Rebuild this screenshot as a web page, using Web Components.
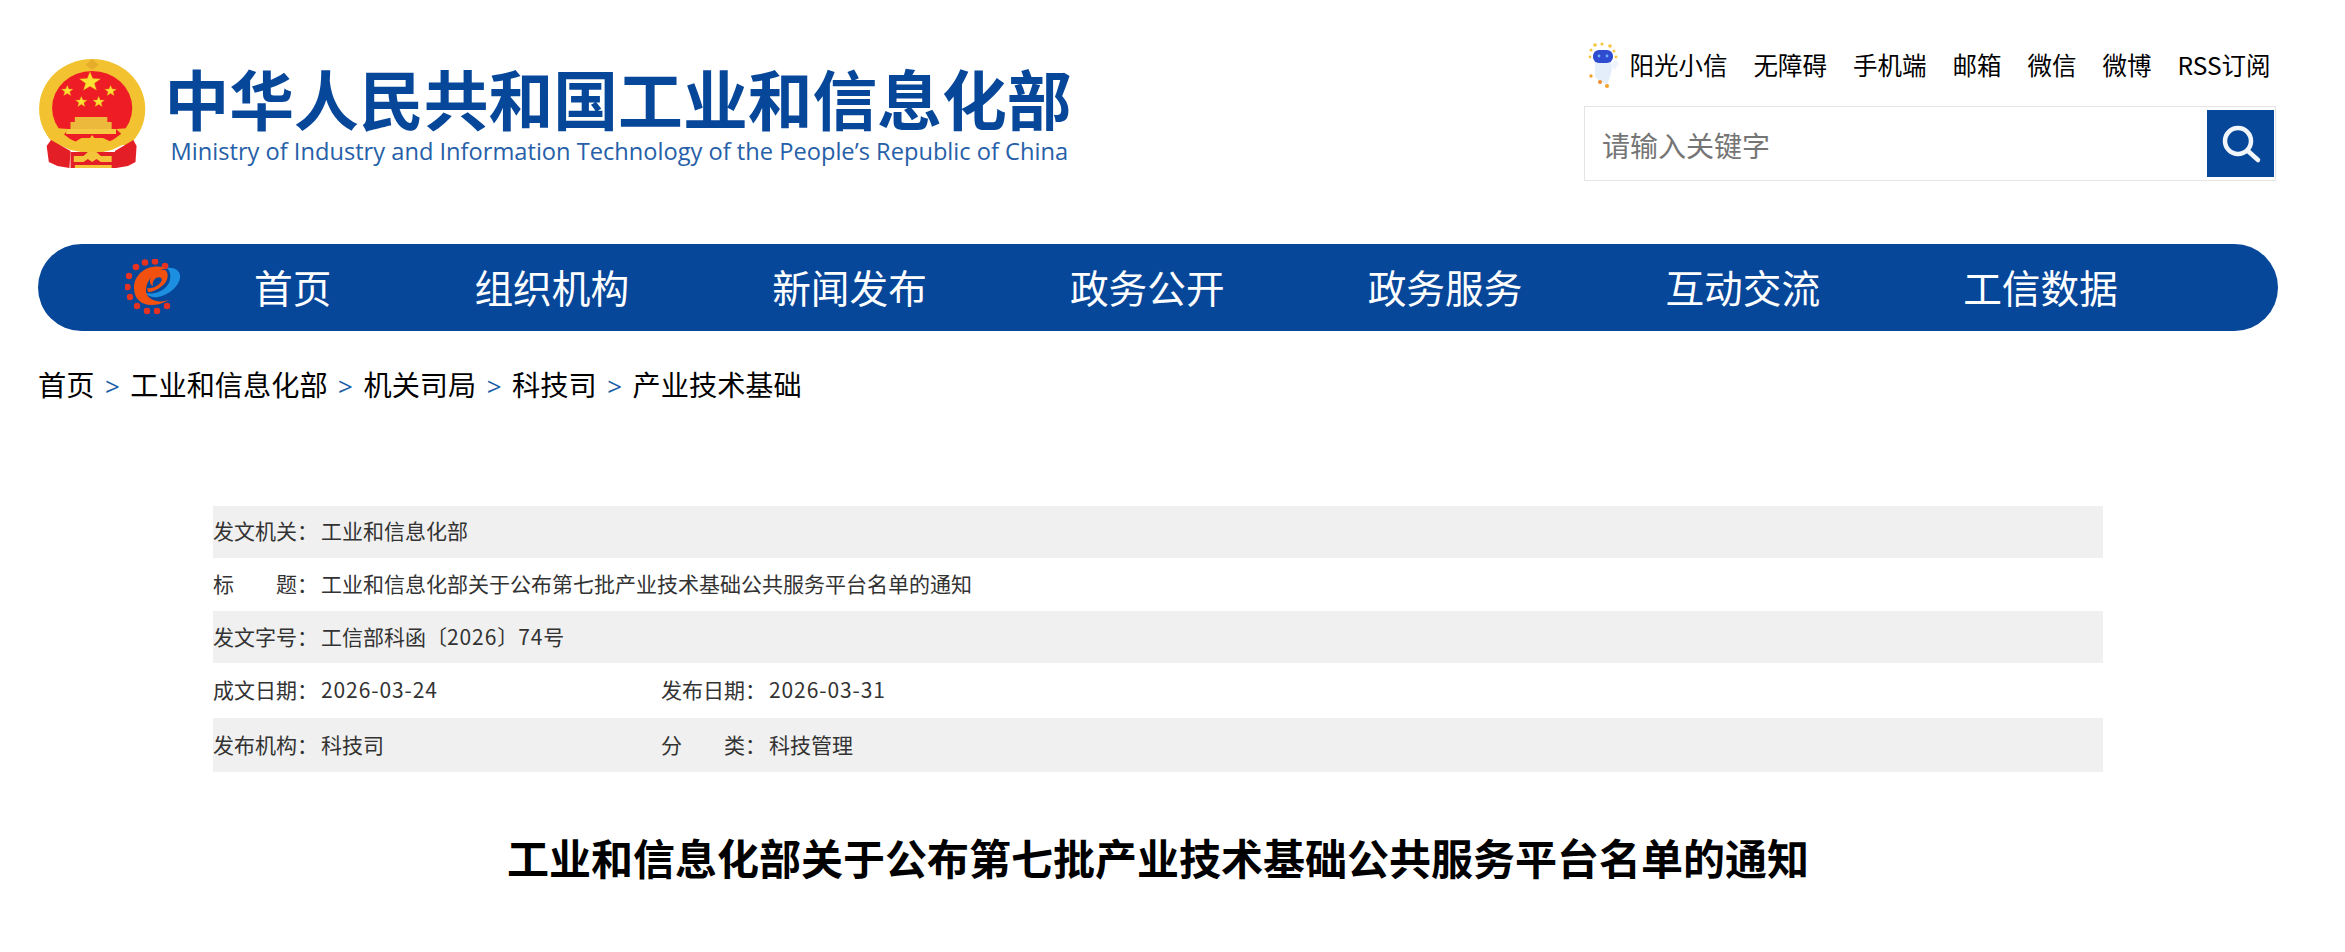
<!DOCTYPE html>
<html lang="zh">
<head>
<meta charset="utf-8">
<title>工业和信息化部关于公布第七批产业技术基础公共服务平台名单的通知</title>
<style>
    html,body{margin:0;background:#fff;}
    body{font-family:"Noto Sans CJK SC","Liberation Sans",sans-serif;color:#000;overflow:hidden;}
</style>
</head>
<body>
<page-wrap>
    <site-header></site-header>
    <main-nav></main-nav>
    <bread-crumb>
        <span>首页</span><span>工业和信息化部</span><span>机关司局</span><span>科技司</span><span>产业技术基础</span>
    </bread-crumb>
    <doc-meta>
        <meta-row label="发文机关：" value="工业和信息化部"></meta-row>
        <meta-row label="标　　题：" value="工业和信息化部关于公布第七批产业技术基础公共服务平台名单的通知"></meta-row>
        <meta-row label="发文字号：" value="工信部科函〔2026〕74号"></meta-row>
        <meta-row label="成文日期：" value="2026-03-24" label2="发布日期：" value2="2026-03-31"></meta-row>
        <meta-row label="发布机构：" value="科技司" label2="分　　类：" value2="科技管理"></meta-row>
    </doc-meta>
    <doc-title>工业和信息化部关于公布第七批产业技术基础公共服务平台名单的通知</doc-title>
</page-wrap>

<script>
const blue = "#07479a";

class PageWrap extends HTMLElement{
    constructor(){
        super();
        this.attachShadow({mode:"open"}).innerHTML = `
        <style>
        :host{display:block;width:2240px;margin-left:38px;}
        </style>
        <slot></slot>`;
    }
}

class GovEmblem extends HTMLElement{
    constructor(){
        super();
        const star = (x,y,r)=>{
            let p = [];
            for(let i=0;i<10;i++){
                const a = -Math.PI/2 + i*Math.PI/5, q = i%2 ? r*0.42 : r;
                p.push((x+q*Math.cos(a)).toFixed(1)+","+(y+q*Math.sin(a)).toFixed(1));
            }
            return `<polygon points="${p.join(" ")}" fill="#fbe232" stroke="#e9a820" stroke-width=".4"/>`;
        };
        this.attachShadow({mode:"open"}).innerHTML = `
        <style>
        :host{display:block;width:130px;height:120px;}
        svg{display:block;filter:blur(.35px);}
        </style>
        <svg width="130" height="120" viewBox="0 0 120 120" preserveAspectRatio="none">
            <path d="M62 9C89 9 111 31 111 59C111 74 105 86 96 95L28 95C19 86 13 74 13 59C13 31 35 9 62 9Z" fill="#f2c230"/>
            <path d="M62 9L68 15L62 20L56 15Z" fill="#e6ad2a"/>
            <circle cx="62" cy="58" r="37" fill="#ee1c25"/>
            ${star(60,32,10)}${star(39,41,5.5)}${star(79,41,5.5)}${star(52,52,5.5)}${star(68,52,5.5)}
            <path d="M46 67H76V72H80V79H42V72H46Z" fill="#edb93c"/>
            <path d="M38 79H84V84H38Z" fill="#f5cb45"/>
            <path d="M20 85L27 78L40 79L35 86L46 92L52 88H60L62 85L64 88H72L80 92L91 86L84 79L98 78L103 85L96 92L80 100L72 102H52L42 100L26 92Z" fill="#f2c230"/>
            <path d="M24 90L42 101L41 118L30 116L22 112L20 96Z" fill="#e41e26"/>
            <path d="M100 90L83 101L84 118L95 116L102 112L103 96Z" fill="#e41e26"/>
            <path d="M42 102H84V118H42Z" fill="#e41e26"/>
            <path d="M45 106H54L58 102H66L70 106H80V112H70L66 109L62 112L58 109L54 112H45Z" fill="#f4c53a"/>
            <path d="M46 115H80V118H46Z" fill="#f4c53a"/>
        </svg>`;
    }
}

class SiteLogo extends HTMLElement{
    constructor(){
        super();
        this.attachShadow({mode:"open"}).innerHTML = `
        <style>
        :host{display:flex;align-items:flex-start;}
        gov-emblem{margin-right:9.5px;flex:none;}
        .txt{padding-top:8px;}
        .cn{font:700 64.8px/78px "Noto Sans CJK SC",sans-serif;color:${blue};white-space:nowrap;}
        .en{font:400 23.65px/30px "Open Sans",sans-serif;color:#2660a8;white-space:nowrap;margin-left:6px;}
        </style>
        <gov-emblem></gov-emblem>
        <div class="txt">
            <div class="cn">中华人民共和国工业和信息化部</div>
            <div class="en">Ministry of Industry and Information Technology of the People’s Republic of China</div>
        </div>`;
    }
}

class TopLinks extends HTMLElement{
    constructor(){
        super();
        const names = ["无障碍","手机端","邮箱","微信","微博","RSS订阅"];
        this.attachShadow({mode:"open"}).innerHTML = `
        <style>
        :host{display:flex;align-items:center;justify-content:flex-end;gap:26px;font:400 24.5px/32px "Noto Sans CJK SC",sans-serif;color:#000;height:55px;padding-right:5.5px;}
        .bot{display:flex;align-items:center;gap:8px;}
        svg{display:block;filter:blur(.4px);}
        </style>
        <div class="bot">
            <svg width="34" height="52" viewBox="0 0 34 52">
                <path d="M8 23H24L25 30L23 38L20 46L13 42L8 38Z" fill="#e4eefa"/>
                <path d="M24 25L29 21L32 25L27 31Z" fill="#eef4fb"/>
                <rect x="6" y="11" width="20" height="13" rx="6" fill="#2f4bd0"/>
                <circle cx="12" cy="17" r="1.4" fill="#6db2f8"/><circle cx="20" cy="17" r="1.4" fill="#6db2f8"/>
                <g fill="#f8c63e">
                    <circle cx="8" cy="6" r="1.8"/><circle cx="15" cy="5" r="1.6"/><circle cx="23" cy="7" r="1.8"/><circle cx="27" cy="12" r="1.5"/><circle cx="4" cy="11" r="1.5"/><circle cx="3" cy="18" r="1.4"/><circle cx="29" cy="18" r="1.4"/>
                </g>
                <circle cx="4" cy="37" r="1.7" fill="#f4a02c"/><circle cx="13" cy="43" r="2" fill="#f08a2c"/><circle cx="20" cy="47" r="2" fill="#f4a02c"/>
            </svg>
            <span>阳光小信</span>
        </div>
        ${names.map(n=>`<span>${n}</span>`).join("")}`;
    }
}

class SearchBox extends HTMLElement{
    constructor(){
        super();
        this.attachShadow({mode:"open"}).innerHTML = `
        <style>
        :host{display:flex;align-items:center;justify-content:space-between;box-sizing:border-box;width:692px;height:75px;border:1px solid #e5e5e5;padding:0 1px 0 17px;background:#fff;}
        .ph{font:400 28px/40px "Noto Sans CJK SC",sans-serif;color:#757575;padding-top:2px;}
        .btn{width:67px;height:67px;background:${blue};display:flex;align-items:center;justify-content:center;}
        </style>
        <span class="ph">请输入关键字</span>
        <div class="btn">
            <svg width="44" height="44" viewBox="0 0 44 44" fill="none" stroke="#f2f6fb" stroke-linecap="round">
                <circle cx="19" cy="19" r="13" stroke-width="4.5"/>
                <path d="M29 29L39 38" stroke-width="4.5"/>
            </svg>
        </div>`;
    }
}

class SiteHeader extends HTMLElement{
    constructor(){
        super();
        this.attachShadow({mode:"open"}).innerHTML = `
        <style>
        :host{display:flex;justify-content:space-between;align-items:flex-start;height:244px;box-sizing:border-box;}
        site-logo{margin-top:50px;margin-left:-13px;}
        .right{display:flex;flex-direction:column;align-items:flex-end;margin-top:37px;padding-right:2px;}
        search-box{margin-top:14px;}
        </style>
        <site-logo></site-logo>
        <div class="right">
            <top-links></top-links>
            <search-box></search-box>
        </div>`;
    }
}

class MainNav extends HTMLElement{
    constructor(){
        super();
        const items = ["首页","组织机构","新闻发布","政务公开","政务服务","互动交流","工信数据"];
        this.attachShadow({mode:"open"}).innerHTML = `
        <style>
        :host{display:flex;align-items:center;height:87px;border-radius:44px;background:${blue};padding-left:87px;box-sizing:border-box;}
        svg{display:block;flex:none;filter:blur(.5px);}
        .items{display:flex;gap:143px;margin-left:71px;margin-top:-2px;}
        .items span{font:400 38.7px/85px "Noto Sans CJK SC",sans-serif;color:#fff;white-space:nowrap;}
        </style>
        <svg width="58" height="58" viewBox="0 0 58 58">
            <g fill="#e63220">
                <circle cx="20" cy="3.5" r="3.3"/><circle cx="30" cy="2.5" r="3.3"/><circle cx="40" cy="7" r="3.3"/>
                <circle cx="11" cy="8" r="3.3"/><circle cx="4" cy="17" r="3.2"/><circle cx="2.5" cy="28" r="3.2"/>
                <circle cx="5" cy="38" r="3.2"/><circle cx="12" cy="47" r="3.2"/><circle cx="22" cy="52" r="3.2"/>
                <circle cx="32" cy="52" r="3.2"/><circle cx="42" cy="47" r="3.2"/>
            </g>
            <path d="M42 9C50 8 56 12 55 19C54 27 44 36 33 38C28 39 23 37 20 34C28 36 37 33 42 27C46 22 47 14 42 9Z" fill="#1d8fe0"/>
            <path d="M40 9C26 4 9 13 9 29C9 44 24 52 44 41C32 45 20 40 21 30C22 20 30 13 40 9Z" fill="#f2500e"/>
            <path d="M40 11C44 13 44 22 37 27C32 31 27 33 23 33L22 29C27 30 33 27 36 23C38 20 36 17 31 19C28 21 27 25 28 27C25 26 24 22 26 18C29 13 35 10 40 11Z" fill="#f2500e"/>
        </svg>
        <div class="items">${items.map(n=>`<span>${n}</span>`).join("")}</div>`;
    }
}

class BreadCrumb extends HTMLElement{
    constructor(){
        super();
        this.attachShadow({mode:"open"}).innerHTML = `
        <style>
        :host{display:block;margin-top:32px;height:42px;font:400 28.2px/42px "Noto Sans CJK SC",sans-serif;color:#000;white-space:nowrap;}
        </style>
        <slot></slot>`;
    }
    connectedCallback(){
        // the > between the crumbs lives in light dom, so it shows up through the slot
        const kids = [...this.children];
        kids.slice(0,-1).forEach(k=>{
            const s = document.createElement("span");
            s.textContent = ">";
            s.style.cssText = "color:#1a5ea8;margin:0 10.5px;font-family:'Open Sans',sans-serif;font-size:26px;";
            k.after(s);
        });
    }
}

class DocMeta extends HTMLElement{
    constructor(){
        super();
        this.attachShadow({mode:"open"}).innerHTML = `
        <style>
        :host{display:block;width:1890px;margin:100.5px 0 0 175px;}
        ::slotted(meta-row:nth-child(odd)){background:#f0f0f0;}
        </style>
        <slot></slot>`;
    }
}

class MetaRow extends HTMLElement{
    constructor(){
        super();
        const a = n=>this.getAttribute(n);
        // digits come out narrower than the reference, so they get some spacing
        const num = v=>v.replace(/[\d-]+/g,m=>`<span class="n">${m}</span>`);
        const cell = (l,v)=>`<div class="cell"><span class="l">${l}</span><span>${num(v)}</span></div>`;
        this.attachShadow({mode:"open"}).innerHTML = `
        <style>
        :host{display:flex;align-items:center;box-sizing:border-box;padding-bottom:3px;height:52.67px;font:400 21px/30px "Noto Sans CJK SC",sans-serif;color:#333;}
        :host([label2]){height:54.5px;}
        .cell{display:flex;width:448px;white-space:nowrap;}
        .l{width:108px;flex:none;}
        .n{letter-spacing:.9px;}
        </style>
        ${cell(a("label"),a("value"))}${a("label2") ? cell(a("label2"),a("value2")) : ""}`;
    }
}

class DocTitle extends HTMLElement{
    constructor(){
        super();
        this.attachShadow({mode:"open"}).innerHTML = `
        <style>
        :host{display:block;margin:0 0 0 175px;width:1890px;padding-top:54.5px;font:700 42px/60px "Noto Sans CJK SC",sans-serif;color:#000;text-align:center;white-space:nowrap;}
        </style>
        <slot></slot>`;
    }
}

customElements.define("gov-emblem",GovEmblem);
customElements.define("site-logo",SiteLogo);
customElements.define("top-links",TopLinks);
customElements.define("search-box",SearchBox);
customElements.define("site-header",SiteHeader);
customElements.define("main-nav",MainNav);
customElements.define("bread-crumb",BreadCrumb);
customElements.define("meta-row",MetaRow);
customElements.define("doc-meta",DocMeta);
customElements.define("doc-title",DocTitle);
customElements.define("page-wrap",PageWrap);
</script>
</body>
</html>
